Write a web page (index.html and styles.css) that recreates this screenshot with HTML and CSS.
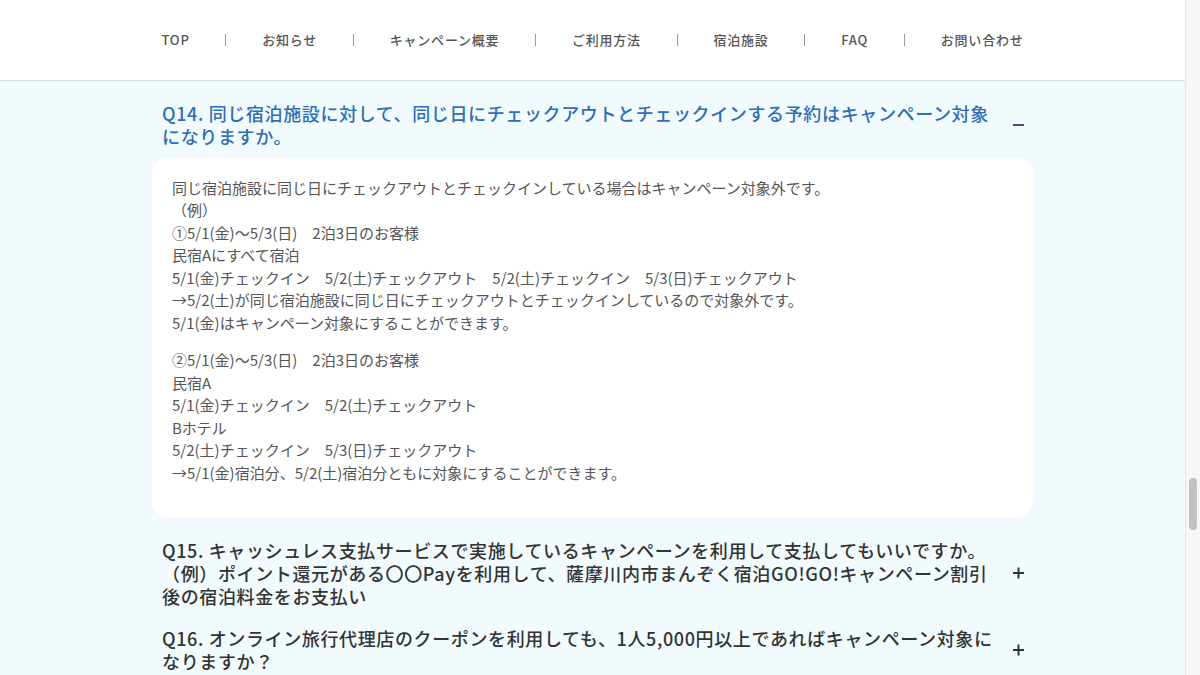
FILE: index.html
```html
<!DOCTYPE html>
<html lang="ja">
<head>
<meta charset="utf-8">
<title>FAQ</title>
<link rel="stylesheet" href="styles.css">
</head>
<body>
<div class="window">
  <div class="page">
    <header class="header">
      <nav class="nav">
        <a class="nav-item">TOP</a><span class="sep"></span>
        <a class="nav-item">お知らせ</a><span class="sep"></span>
        <a class="nav-item">キャンペーン概要</a><span class="sep"></span>
        <a class="nav-item">ご利用方法</a><span class="sep"></span>
        <a class="nav-item">宿泊施設</a><span class="sep"></span>
        <a class="nav-item">FAQ</a><span class="sep"></span>
        <a class="nav-item">お問い合わせ</a>
      </nav>
    </header>
    <main class="faq">
      <section class="item open">
        <div class="q">
          <p class="q-text">Q14. 同じ宿泊施設に対して、同じ日にチェックアウトとチェックインする予約はキャンペーン対象になりますか。</p>
          <span class="icon minus"></span>
        </div>
        <div class="a">
          <p>同じ宿泊施設に同じ日にチェックアウトとチェックインしている場合はキャンペーン対象外です。<br>（例）<br>①5/1(金)～5/3(日)　2泊3日のお客様<br>民宿Aにすべて宿泊<br>5/1(金)チェックイン　5/2(土)チェックアウト　5/2(土)チェックイン　5/3(日)チェックアウト<br>→5/2(土)が同じ宿泊施設に同じ日にチェックアウトとチェックインしているので対象外です。<br>5/1(金)はキャンペーン対象にすることができます。</p>
          <p>②5/1(金)～5/3(日)　2泊3日のお客様<br>民宿A<br>5/1(金)チェックイン　5/2(土)チェックアウト<br>Bホテル<br>5/2(土)チェックイン　5/3(日)チェックアウト<br>→5/1(金)宿泊分、5/2(土)宿泊分ともに対象にすることができます。</p>
        </div>
      </section>
      <section class="item">
        <div class="q">
          <p class="q-text"><span class="q-line">Q15. キャッシュレス支払サービスで実施しているキャンペーンを利用して支払してもいいですか。</span><span class="q-line">（例）ポイント還元がある〇〇Payを利用して、薩摩川内市まんぞく宿泊GO!GO!キャンペーン割引後の宿泊料金をお支払い</span></p>
          <span class="icon plus"></span>
        </div>
      </section>
      <section class="item">
        <div class="q">
          <p class="q-text">Q16. オンライン旅行代理店のクーポンを利用しても、1人5,000円以上であればキャンペーン対象になりますか？</p>
          <span class="icon plus"></span>
        </div>
      </section>
    </main>
  </div>
  <div class="scrollbar"><div class="thumb"></div></div>
</div>
</body>
</html>
```
FILE: styles.css
```css
html, body {
  margin: 0;
  padding: 0;
}
body {
  font-family: "Noto Sans CJK JP", "Noto Sans", sans-serif;
  background: #f1fafc;
  color: #333;
}
.window {
  display: flex;
  width: 1200px;
  height: 675px;
  overflow: hidden;
}
.page {
  flex: 1;
  min-width: 0;
}
.header {
  height: 80px;
  background: #fff;
  border-bottom: 1px solid #d6e2e4;
  display: flex;
  align-items: center;
}
.nav {
  width: 862px;
  margin: 0 auto;
  display: flex;
  justify-content: space-between;
  align-items: center;
}
.nav-item {
  font-size: 13px;
  font-weight: 500;
  color: #555;
  letter-spacing: 0.06em;
  line-height: 20px;
}
.sep {
  width: 1px;
  height: 12px;
  background: #9a9a9a;
}
.faq {
  width: 881px;
  margin: 0 auto;
  padding-top: 11px;
}
.q {
  display: flex;
  align-items: center;
  padding: 10px 9px 10px 10px;
}
.q-text {
  flex: 1;
  margin: 0;
  font-size: 18px;
  font-weight: 500;
  line-height: 22.8px;
  letter-spacing: 0.035em;
  color: #333;
}
.q-line {
  display: block;
}
.open .q-text {
  color: #2f6db5;
}
.icon {
  width: 30px;
  height: 12px;
  position: relative;
  flex: none;
}
.icon::before,
.icon::after {
  content: "";
  position: absolute;
  right: 0;
  top: 5px;
  width: 11px;
  height: 2px;
  background: #333;
}
.minus::before {
  background: #3d5670;
}
.minus::after {
  display: none;
}
.plus::after {
  transform: rotate(90deg);
}
.a {
  background: #fff;
  border-radius: 16px;
  padding: 19px 20px 18px;
  margin-bottom: 12px;
}
.a p {
  margin: 0 0 15px;
  font-size: 15px;
  line-height: 22.5px;
  color: #555;
  font-weight: 400;
}
.scrollbar {
  width: 15px;
  height: 675px;
  background: #f7f7f7;
  border-left: 1px solid #e6e6e6;
  box-sizing: border-box;
  flex: none;
  padding-top: 478px;
}
.thumb {
  width: 8px;
  height: 52px;
  margin-left: 3px;
  border-radius: 4px;
  background: #c1c1c1;
}
```
